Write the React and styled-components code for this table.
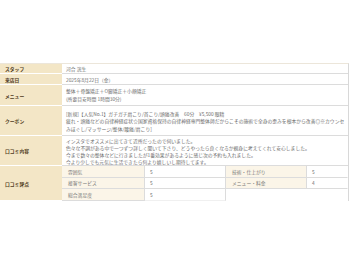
import React from "react";
import styled, { createGlobalStyle } from "styled-components";

const GlobalStyle = createGlobalStyle`
  html, body {
    margin: 0;
    padding: 0;
    background: #fff;
    overflow: hidden;
  }
  body {
    font-family: "Noto Sans CJK JP", "Noto Sans", sans-serif;
  }
`;

const Page = styled.div`
  width: 349px;
  height: 262px;
  padding-top: 63px;
  box-sizing: border-box;
`;

const Table = styled.div`
  width: 348px;
  border-top: 1px solid #ece6da;
  border-right: 1px solid #d8d8d8;
  font-size: 4.8px;
`;

const Row = styled.div`
  display: grid;
  grid-template-columns: 62px 1fr;
`;

const Label = styled.div`
  display: flex;
  align-items: center;
  padding: 0 5px;
  background: #f3e6c6;
  color: #4f3b22;
  font-weight: 700;
  border-bottom: 1px solid #fff;
`;

const Value = styled.div`
  padding: ${(p) => p.$pad || "1px 4px"};
  color: #6c6c6c;
  border-bottom: 1px solid #dcdcdc;
  white-space: nowrap;
  min-width: 0;
`;

const Line = styled.div`
  height: ${(p) => p.$h || 7.5}px;
  line-height: ${(p) => p.$h || 7.5}px;
`;

const ScoreGrid = styled.div`
  display: grid;
  grid-template-columns: 83px 81px 81px 1fr;
`;

const ScoreLabel = styled.div`
  height: 7.5px;
  line-height: 7.5px;
  padding: 1.6px 6px;
  background: #fbf5e8;
  color: #777;
  border-bottom: 1px solid #dcdcdc;
  border-right: 1px solid #dcdcdc;
`;

const ScoreValue = styled.div`
  height: 7.5px;
  line-height: 7.5px;
  padding: 1.6px 5px;
  color: #6c6c6c;
  border-bottom: 1px solid ${(p) => (p.$last ? "#f0f0f0" : "#dcdcdc")};
  border-right: 1px solid ${(p) => (p.$end ? "transparent" : "#dcdcdc")};
`;

const scores = [
  ["雰囲気", "5", "技術・仕上がり", "5"],
  ["接客サービス", "5", "メニュー・料金", "4"],
  ["総合満足度", "5"],
];

export default function App() {
  return (
    <Page>
      <GlobalStyle />
      <Table>
        <Row>
          <Label>スタッフ</Label>
          <Value $pad="1px 4px 0.5px">
            <Line>河合 洸生</Line>
          </Value>
        </Row>
        <Row>
          <Label>来店日</Label>
          <Value $pad="1.5px 4px 1px">
            <Line>2025年8月22日（金）</Line>
          </Value>
        </Row>
        <Row>
          <Label>メニュー</Label>
          <Value $pad="2px 4px 3px">
            <Line>整体＋骨盤矯正＋O脚矯正＋小顔矯正</Line>
            <Line>(所要目安時間 1時間30分)</Line>
          </Value>
        </Row>
        <Row>
          <Label>クーポン</Label>
          <Value $pad="3.5px 4px 3px">
            <Line>[新規]【人気No.1】ガチガチ肩こり/首こり/頭痛改善　60分　¥5,500 眼精</Line>
            <Line>
              疲れ・頭痛などの自律神経症状☆国家資格保持の自律神経専門整体師だからこその施術で全身の歪みを根本から改善◎※カウンセ
            </Line>
            <Line>みほぐし/マッサージ/整体/腰痛/肩こり]</Line>
          </Value>
        </Row>
        <Row>
          <Label>口コミ内容</Label>
          <Value $pad="1px 4px 0">
            <Line $h={7}>インスタでオススメに出てきて近所だったので伺いました。</Line>
            <Line $h={7}>
              色々な不調がある中で一つずつ詳しく聞いて下さり、どうやったら良くなるか親身に考えてくれて安心しました。
            </Line>
            <Line $h={7}>今まで数々の整体などに行きましたが1番効果があるように感じ次の予約も入れました。</Line>
            <Line $h={7}>今より少しでも元気に生活できたら何より嬉しいし期待してます。</Line>
          </Value>
        </Row>
        <Row>
          <Label>口コミ評点</Label>
          <ScoreGrid>
            {scores.map((s, i) => (
              <React.Fragment key={s[0]}>
                <ScoreLabel>{s[0]}</ScoreLabel>
                <ScoreValue $last={i === scores.length - 1}>{s[1]}</ScoreValue>
                {s[2] ? (
                  <>
                    <ScoreLabel>{s[2]}</ScoreLabel>
                    <ScoreValue $end>{s[3]}</ScoreValue>
                  </>
                ) : null}
              </React.Fragment>
            ))}
          </ScoreGrid>
        </Row>
      </Table>
    </Page>
  );
}
